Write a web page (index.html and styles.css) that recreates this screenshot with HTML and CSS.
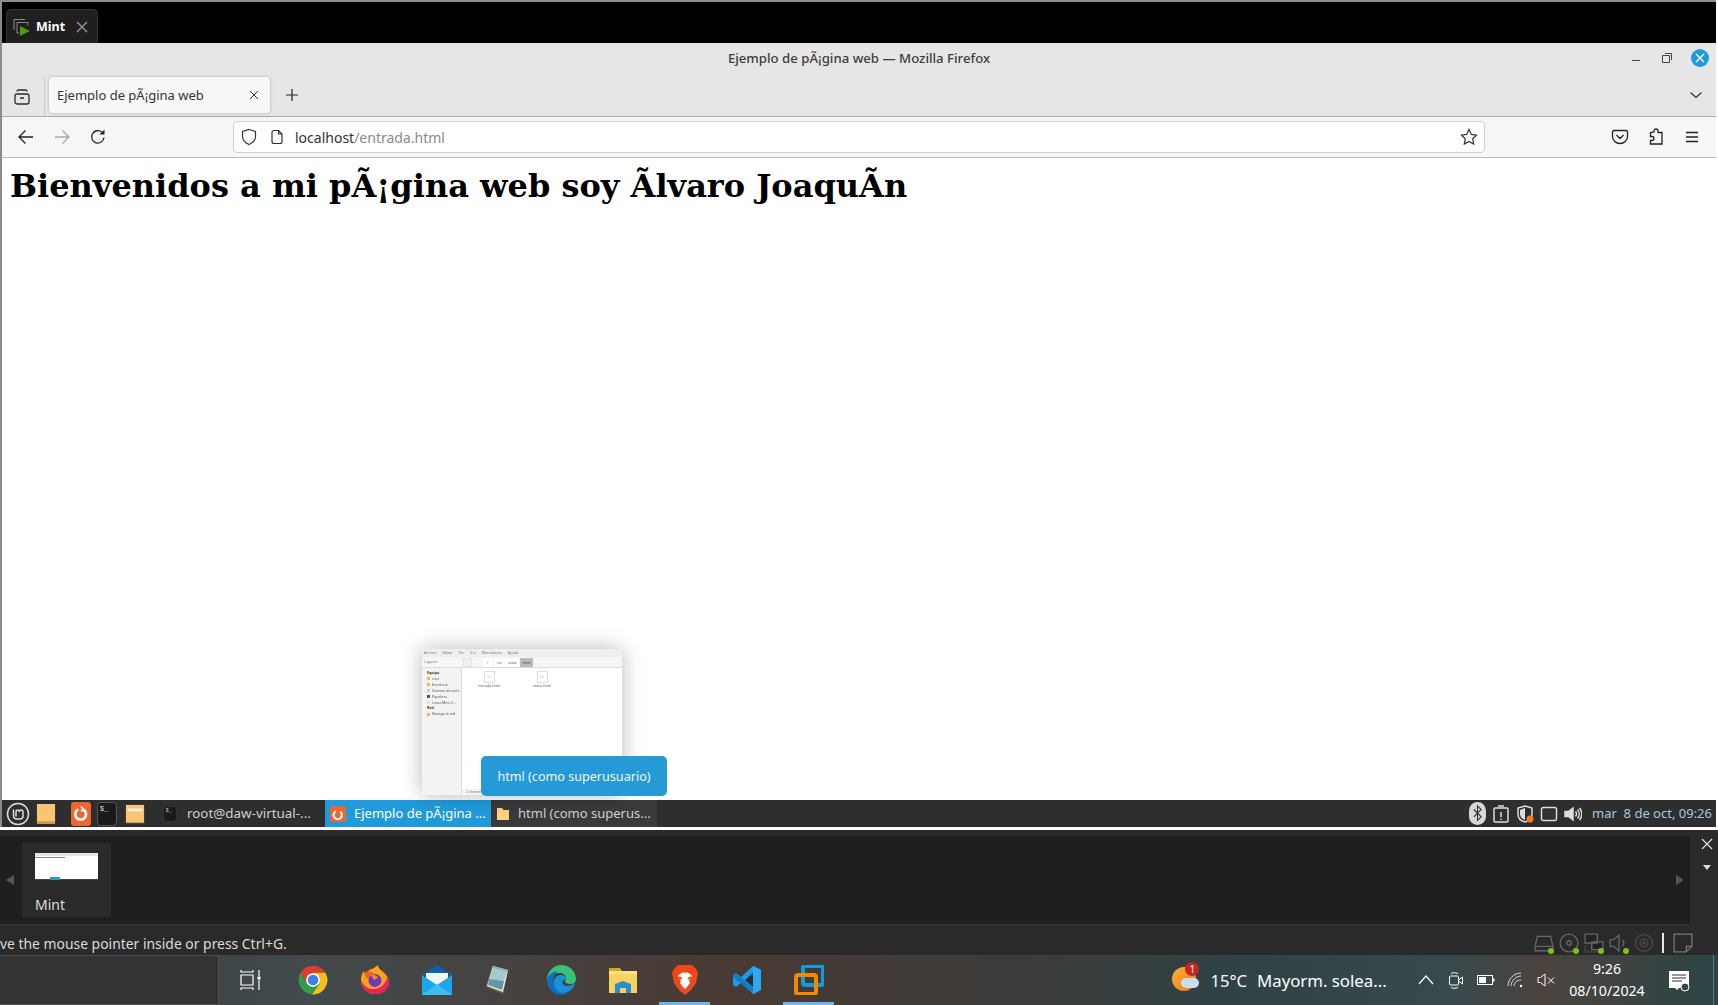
FILE: index.html
```html
<!DOCTYPE html>
<html lang="es">
<head>
<meta charset="utf-8">
<title>Ejemplo de pÃ¡gina web</title>
<link rel="stylesheet" href="styles.css">
</head>
<body>
<header class="vm-tabs">
  <div class="vm-tab">
    <svg class="i18" viewBox="0 0 18 18" fill="none" stroke="#8a8a8a" stroke-width="1"><path d="M1 12V1.5h11M4 15V4.5h11v3M4 15h2"/><path d="M7 8l10 5-10 5z" fill="#4f9a0c" stroke="none"/></svg>
    <span class="vm-tab-name">Mint</span>
    <svg class="i14" viewBox="0 0 14 14" stroke="#8c8c8c" stroke-width="1.6"><path d="M2 2l10 10M12 2L2 12"/></svg>
  </div>
</header>

<section class="guest">
  <div class="titlebar">
    <div></div>
    <div class="win-title">Ejemplo de pÃ¡gina web — Mozilla Firefox</div>
    <div class="win-ctrl">
      <svg class="i14" viewBox="0 0 14 14" stroke="#444"><path d="M3 9.500h8"/></svg>
      <svg class="i14" viewBox="0 0 14 14" fill="none" stroke="#444"><path d="M2.500 4.500h7v7h-7zM5 2.500h6.500V9" /></svg>
      <span class="win-close"><svg class="i12" viewBox="0 0 12 12" stroke="#fff" stroke-width="1.400"><path d="M2 2l8 8M10 2l-8 8"/></svg></span>
    </div>
  </div>
  <div class="tabrow">
    <div class="tabview"><svg class="i18" viewBox="0 0 18 18" fill="none" stroke="#2b2b2b" stroke-width="1.300"><rect x="2" y="6" width="14" height="10" rx="2"/><path d="M4 3.500c0-1 .5-1.500 1.500-1.500h7c1 0 1.500.5 1.500 1.500M7 10h4"/></svg></div>
    <div class="tab">
      <span class="tab-label">Ejemplo de pÃ¡gina web</span>
      <svg class="i12" viewBox="0 0 12 12" stroke="#333"><path d="M2 2l8 8M10 2l-8 8"/></svg>
    </div>
    <svg class="newtab i14" viewBox="0 0 14 14" stroke="#222" stroke-width="1.200"><path d="M7 1v12M1 7h12"/></svg>
    <svg class="tablist i14" viewBox="0 0 14 14" fill="none" stroke="#333" stroke-width="1.200"><path d="M1.500 4.500L7 9.500l5.500-5"/></svg>
  </div>
  <nav class="navbar">
    <span class="navcell"><svg class="i18" viewBox="0 0 18 18" fill="none" stroke="#222" stroke-width="1.300"><path d="M16 9H2M8.500 2.500L2 9l6.500 6.500"/></svg></span>
    <span class="navcell"><svg class="i18" viewBox="0 0 18 18" fill="none" stroke="#aaa" stroke-width="1.300"><path d="M2 9h14M9.500 2.500L16 9l-6.500 6.500"/></svg></span>
    <span class="navcell"><svg class="i18" viewBox="0 0 18 18" fill="none" stroke="#222" stroke-width="1.300"><path d="M15 9.500A6.200 6.200 0 1 1 13 4.300"/><path d="M15.500 1.500v5h-5" fill="#222" stroke="none"/></svg></span>
    <div class="urlbar">
      <svg class="i18" viewBox="0 0 18 18" fill="none" stroke="#333" stroke-width="1.200"><path d="M9 1.500l6.500 2v5c0 4-3 6.500-6.500 8-3.500-1.500-6.500-4-6.500-8v-5z"/></svg>
      <svg class="i16 url-page" viewBox="0 0 16 16" fill="none" stroke="#333" stroke-width="1.200"><path d="M3 3.500c0-1 .5-2 2-2h4.500L13 5v7.500c0 1-.5 2-2 2H5c-1.500 0-2-1-2-2zM9.500 1.500V5H13"/></svg>
      <span class="url-text"><span class="url-host">localhost</span>/entrada.html</span>
      <svg class="i18" viewBox="0 0 18 18" fill="none" stroke="#333" stroke-width="1.200"><path d="M9 1.500l2.300 4.900 5.200.7-3.800 3.600 1 5.300L9 13.400 4.300 16l1-5.300L1.500 7.100l5.200-.7z"/></svg>
    </div>
    <div class="nav-right">
      <span class="navcell"><svg class="i18" viewBox="0 0 18 18" fill="none" stroke="#222" stroke-width="1.300"><path d="M3 2.500h12c1 0 1.500.5 1.500 1.500v4.500c0 4-3.500 7-7.500 7s-7.500-3-7.500-7V4c0-1 .5-1.500 1.500-1.500zM5.500 7L9 10.500 12.500 7"/></svg></span>
      <span class="navcell"><svg class="i18" viewBox="0 0 18 18" fill="none" stroke="#222" stroke-width="1.300"><path d="M7 4V3a2 2 0 0 1 4 0v1.500h4V16H3.500v-3.500H5a2 2 0 0 0 0-4H3.500V4.500z"/></svg></span>
      <span class="navcell"><svg class="i18" viewBox="0 0 18 18" stroke="#222" stroke-width="1.300"><path d="M3 4.500h12M3 9h12M3 13.500h12"/></svg></span>
    </div>
  </nav>

  <main class="content">
    <h1>Bienvenidos a mi pÃ¡gina web soy Ãlvaro JoaquÃ­n</h1>

    <div class="preview">
      <div class="pv-menu"><span>Archivo</span><span>Editar</span><span>Ver</span><span>Ir a</span><span>Marcadores</span><span>Ayuda</span></div>
      <div class="pv-tools"><span class="pv-places">Lugares</span><span class="pv-edit"></span><span class="pv-crumb pv-gap">/</span><span class="pv-crumb">var</span><span class="pv-crumb">www</span><span class="pv-crumb pv-on">html</span></div>
      <div class="pv-body">
        <div class="pv-side">
          <b>Equipo</b><span class="dot">root</span><span class="dot">Escritorio</span><span class="dot grey">Sistema de arch...</span><span class="dot dark">Papelera</span><span class="dot pale">Linux Mint 2...</span>
          <b>Red</b><span class="dot">Navega la red</span>
        </div>
        <div class="pv-main">
          <div class="pv-files">
            <div class="pv-file"><span class="pv-doc">&lt;/&gt;</span>entrada.html</div>
            <div class="pv-file"><span class="pv-doc">&lt;/&gt;</span>index.html</div>
          </div>
          <div class="pv-status">2 elementos</div>
        </div>
      </div>
    </div>
    <div class="tooltip">html (como superusuario)</div>
  </main>

  <footer class="mint-panel">
    <div class="launchers">
      <svg class="i24" viewBox="0 0 24 24" fill="none" stroke="#ddd"><circle cx="12" cy="12" r="10.500" stroke-width="1.500"/><path d="M7.500 7.500v6c0 2.500 1.500 3.500 3.500 3.500h3c2 0 3-1.500 3-3V10c0-1-1-2-2-2s-1.500 1-1.500 1.500-.5-1.500-1.500-1.500-2 1-2 2v4.500" stroke-width="1.500"/></svg>
      <svg class="i22" viewBox="0 0 22 22"><path d="M1 0h20v20H1z" fill="#f8c672"/><path d="M1 19h20v3H1z" fill="#c99a4e"/></svg>
      <span class="fx-square lg"><svg viewBox="0 0 20 20" fill="none" stroke="#fff" stroke-width="3"><path d="M7 6a6 6 0 1 0 6 .5"/><path d="M10 3l3 3-3 2" stroke-width="2"/></svg></span>
      <span class="term-ico"><svg viewBox="0 0 20 20"><text x="2" y="9" class="term-txt">$_</text></svg></span>
      <svg class="i22 files-ico" viewBox="0 0 22 22"><path d="M1 1h20v20H1z" fill="#f8c672"/><path d="M3 5h16v3H3z" fill="#f4efe3"/><path d="M1 20h20v1H1z" fill="#c99a4e"/></svg>
    </div>
    <div class="wlist">
      <div class="wbtn"><span class="term-ico sm"><svg viewBox="0 0 20 20"><text x="3" y="9" class="term-txt">$_</text></svg></span><span class="wname">root@daw-virtual-...</span></div>
      <div class="wbtn on"><span class="fx-square"><svg viewBox="0 0 20 20" fill="none" stroke="#fff" stroke-width="3"><path d="M7 6a6 6 0 1 0 6 .5"/></svg></span><span class="wname">Ejemplo de pÃ¡gina ...</span></div>
      <div class="wbtn sel"><svg class="i14" viewBox="0 0 14 14"><path d="M1 1h5l1.500 2H13v10H1z" fill="#fbd37d"/></svg><span class="wname">html (como superus...</span></div>
    </div>
    <div class="tray">
      <span class="bt-pill"><svg viewBox="0 0 12 20" fill="none" stroke="#333" stroke-width="1.200"><path d="M2 6l8 8-4 4V2l4 4-8 8"/></svg></span>
      <svg class="i18" viewBox="0 0 18 18" fill="none" stroke="#ddd" stroke-width="1.500"><rect x="2" y="3" width="14" height="14" rx="1"/><path d="M6 1h6M9 7v5M9 13.500v1.500"/></svg>
      <svg class="i18" viewBox="0 0 18 18"><path d="M9 1l7 2v6c0 4-3 7-7 8-4-1-7-4-7-8V3z" fill="none" stroke="#ddd" stroke-width="1.500"/><path d="M9 3v12c-3-1-5-3-5-6V5z" fill="#ddd"/><circle cx="14" cy="14" r="3.500" fill="#f47c20"/></svg>
      <svg class="i18" viewBox="0 0 18 18" fill="none" stroke="#ddd" stroke-width="1.500"><rect x="1.500" y="2.500" width="15" height="13" rx="2"/><path d="M4 7V5h10v8H4z" fill="#333" stroke="none"/></svg>
      <svg class="i18" viewBox="0 0 18 18" fill="none" stroke="#ddd" stroke-width="1.500"><path d="M1 6.500h3.500L9 3v12l-4.500-3.500H1z" fill="#ddd"/><path d="M11.500 6.500a4 4 0 0 1 0 5M13.500 4.500a7 7 0 0 1 0 9M15.500 3a9 9 0 0 1 0 12"/></svg>
      <span class="clock">mar&nbsp; 8 de oct, 09:26</span>
    </div>
  </footer>
</section>

<section class="viewer">
  <div class="viewer-main">
    <div class="strip">
      <span class="arrow left"></span>
      <div class="snap">
        <div class="snap-shot"><span class="snap-top"></span><span class="snap-bar"></span><span class="snap-foot"></span><span class="snap-tip"></span></div>
        <span class="snap-name">Mint</span>
      </div>
      <span class="arrow right"></span>
    </div>
    <div class="viewer-side">
      <svg class="i14" viewBox="0 0 14 14" stroke="#ddd" stroke-width="1.200"><path d="M2 2l10 10M12 2L2 12"/></svg>
      <span class="tri-down"></span>
    </div>
  </div>
  <div class="status">
    <span class="status-text">ve the mouse pointer inside or press Ctrl+G.</span>
    <div class="status-icons">
      <span class="vb"><svg class="i20" viewBox="0 0 18 18" fill="none" stroke="#666" stroke-width="1.200"><path d="M3 3h12l2 9v4H1v-4zM1 12h16"/></svg><i class="led"></i></span>
      <span class="vb"><svg class="i20" viewBox="0 0 18 18" fill="none" stroke="#666" stroke-width="1.200"><circle cx="9" cy="9" r="8"/><circle cx="9" cy="9" r="2"/></svg><i class="led"></i></span>
      <span class="vb"><svg class="i20" viewBox="0 0 18 18" fill="none" stroke="#666" stroke-width="1.200"><path d="M1 1h11v8H1zM7 8h10v7H7z" fill="#222"/><path d="M1 12v5h14" stroke-dasharray="1 1.500"/></svg><i class="led"></i></span>
      <span class="vb"><svg class="i20" viewBox="0 0 18 18" fill="none" stroke="#666" stroke-width="1.200"><path d="M1 6h3l5-4v14l-5-4H1zM12 6a4 4 0 0 1 0 6"/></svg><i class="led"></i></span>
      <span class="vb"><svg class="i20" viewBox="0 0 18 18" fill="none" stroke="#4c4c4c" stroke-width="1.200"><circle cx="9" cy="9" r="7.500"/><circle cx="9" cy="9" r="3.500"/><circle cx="9" cy="9" r="1"/></svg></span>
      <span class="status-sep"></span>
      <svg class="i20 note" viewBox="0 0 18 18" fill="none" stroke="#777" stroke-width="1.200"><path d="M1 1h16v11l-5 5H1zM17 12h-5v5"/></svg>
    </div>
  </div>
</section>

<footer class="taskbar">
  <div class="search"></div>
  <div class="apps">
    <span class="app"><svg class="i24" viewBox="0 0 24 24" fill="none" stroke="#fff" stroke-width="1.200"><path d="M2 2v2h12V2M2 7h12v10H2zM2 22v-2h12v2M20 2v6M20 12v10"/><path d="M18.500 8.500h3v3h-3z" fill="#fff" stroke="none"/></svg></span>
    <span class="app"><svg class="i30" viewBox="0 0 48 48"><path d="M4.100 12.500A23 23 0 0 1 43.900 12.500H24L14 30z" fill="#d9402f"/><path d="M43.900 12.500A23 23 0 0 1 22 47L34 30 24 12.500z" fill="#f5bd19"/><path d="M22 47A23 23 0 0 1 4.100 12.500L14 30H34z" fill="#2e9e48"/><circle cx="24" cy="24" r="11" fill="#fff"/><circle cx="24" cy="24" r="8.500" fill="#3f7fe8"/></svg></span>
    <span class="app"><svg class="i30" viewBox="0 0 30 30"><path d="M15 29C7 29 1 23 1 15c0-4 1-7 3-9 0 2 1 3 2 3 1-3 4-5 6-5 3-1 4-3 6-4 0 3 2 4 4 6 4 3 7 7 7 11 0 7-6 12-14 12z" fill="#f8a318"/><path d="M15 29C7 29 1 23 1 15c2 6 8 10 14 9 6-1 11-5 12-12 1 1 2 3 2 5 0 7-6 12-14 12z" fill="#e8215f"/><path d="M4 8c3-2 8-2 10 1-3 1-4 4-2 6-4 0-7-3-8-7z" fill="#f4602a"/><circle cx="15" cy="15.500" r="6.500" fill="#6d38c2"/><path d="M11 10c3-1 6 0 7 3l-4 2z" fill="#f28a1e"/></svg></span>
    <span class="app"><svg class="i30" viewBox="0 0 30 30"><path d="M15 0L0 10h30z" fill="#0a62b5"/><path d="M4 8h22v7l-11 7L4 15z" fill="#f2f5f8"/><path d="M0 10l15 10 15-10v20H0z" fill="#1da7ea"/><path d="M0 30l15-11 15 11z" fill="#3fbcf4"/></svg></span>
    <span class="app"><svg class="i30" viewBox="0 0 30 30"><path d="M8 1l16 5-5 23L2 22z" fill="#7a6a3a"/><path d="M9 1l15 4-5 22L3 21z" fill="#e4eef0"/><path d="M9 3l14 4-3 9L5 14z" fill="#a4c9d0"/><path d="M5 14l15 2-2 9-14-5z" fill="#5f97a4"/><path d="M9 1l15 4-.5 2L8.500 3z" fill="#9aa"/></svg></span>
    <span class="app"><svg class="i30" viewBox="0 0 30 30"><path d="M15 0c8 0 15 6 15 14 0 3-2 5-6 5-3 0-5-1-5-3 0-1 1-1 1-3 0-3-3-5-7-5C7 8 3 11 1 15 1 7 7 0 15 0z" fill="#37c27b"/><path d="M1 15C2 10 7 6 12 6c-3 2-5 6-4 11 1 6 7 11 14 11-2 1-5 2-7 2C7 30 1 23 1 15z" fill="#0f6ec0"/><path d="M8 17c0-4 3-7 7-7 3 0 5 1 5 3 0 1-2 1-3 3s0 5 4 5c3 0 6-1 8-3-1 5-6 10-12 10-5 0-9-4-9-11z" fill="#1592d8"/></svg></span>
    <span class="app"><svg class="i30" viewBox="0 0 30 30"><path d="M1 3h11l2 3H1z" fill="#d9a21a"/><path d="M1 6h28v22H1z" fill="#f9d35f"/><path d="M1 6h28v3H1z" fill="#fbe08a"/><path d="M7 28V19l8-3 8 3v9h-5v-5h-6v5z" fill="#2b8ed0"/></svg></span>
    <span class="app on"><svg class="i30" viewBox="0 0 30 30"><path d="M8 0h14l4 4 2 4-2 10-5 7-6 5-6-5-5-7L2 8l2-4z" fill="#f1481a"/><path d="M10 9c2-1 3-2 5-1 2-1 3 0 5 1l2 2-3 5 1 2-3 4-2 2-2-2-3-4 1-2-3-5z" fill="#fff"/><path d="M9 12l3 2M21 12l-3 2" stroke="#f1481a" stroke-width="2"/></svg></span>
    <span class="app"><svg class="i30" viewBox="0 0 30 30"><path d="M21 1l8 4v20l-8 4-12-11-5 4-3-2v-10l3-2 5 4z" fill="#1b9ce8"/><path d="M21 8v14l-8-7z" fill="#2b2e32"/><path d="M21 1v28l8-4V5z" fill="#2ba9f2"/><path d="M1 10l3-2 17 15v6L1 12z" fill="#0e6fb4" opacity=".7"/></svg></span>
    <span class="app on"><svg class="i30" viewBox="0 0 30 30" fill="none"><rect x="9" y="1" width="20" height="19" rx="2" stroke="#109ce0" stroke-width="4"/><rect x="2" y="10" width="20" height="19" rx="2" stroke="#f08a00" stroke-width="4"/></svg></span>
  </div>
  <div class="systray">
    <div class="weather">
      <span class="wx-icon"><span class="sun"></span><span class="cloud"></span><span class="badge">1</span></span>
      <span class="temp">15°C</span><span class="wx-text">Mayorm. solea...</span>
    </div>
    <div class="sys-icons">
      <svg class="i18" viewBox="0 0 18 18" fill="none" stroke="#fff" stroke-width="1.200"><path d="M2 13l7-8 7 8"/></svg>
      <svg class="i18" viewBox="0 0 18 18" fill="none" stroke="#fff" stroke-width="1"><rect x="2.500" y="5" width="9" height="9" rx="1"/><path d="M11.500 9l4-3v7l-4-3M4 2.500c2-1 5-1 7 0M4 16.500c2 1 5 1 7 0"/></svg>
      <svg class="i18" viewBox="0 0 18 18"><rect x=".5" y="4.500" width="15" height="9" fill="none" stroke="#fff"/><rect x="2" y="6" width="7" height="6" fill="#fff"/><rect x="16" y="7.500" width="1.500" height="3" fill="#fff"/></svg>
      <svg class="i18" viewBox="0 0 18 18" fill="none" stroke="#ddd" stroke-width="1"><path d="M1 15c0-7 6-13 13-13M4 15c0-5 5-10 10-10M7 15c0-3 3-6 7-6"/><circle cx="14" cy="15" r="1.200" fill="#fff" stroke="none"/></svg>
      <svg class="i18" viewBox="0 0 18 18" fill="none" stroke="#fff" stroke-width="1"><path d="M1 6.500h2.500L8 3v12l-4.500-3.500H1zM11 6.500l6 6M17 6.500l-6 6"/></svg>
    </div>
    <div class="datetime"><span>9:26</span><span>08/10/2024</span></div>
    <svg class="i24 notif" viewBox="0 0 24 24"><path d="M2 3h20v17H12l-2 2-2-2H2z" fill="#fff"/><path d="M5 7h14M5 10h14M5 13h10" stroke="#333"/><circle cx="18" cy="19" r="4" fill="#3a4545" stroke="#fff"/></svg>
  </div>
</footer>
</body>
</html>
```
FILE: styles.css
```css
:root { --ui: "Noto Sans", "Liberation Sans", sans-serif; }
* { box-sizing: border-box; }
html, body { margin: 0; padding: 0; }
body { width: 1718px; height: 1005px; overflow: hidden; display: flex; flex-direction: column; background: #fff; font-family: var(--ui); }
svg { display: block; flex: none; }
.i12 { width: 12px; height: 12px; }
.i14 { width: 14px; height: 14px; }
.i16 { width: 16px; height: 16px; }
.i18 { width: 18px; height: 18px; }
.i20 { width: 20px; height: 20px; }
.i22 { width: 22px; height: 22px; }
.i24 { width: 24px; height: 24px; }
.i30 { width: 30px; height: 30px; }

/* VM tab strip */
.vm-tabs { height: 43px; width: 1716px; background: #000; border-top: 2px solid #8c8c8c; border-left: 2px solid #8c8c8c; padding: 7px 0 0 4px; flex: none; }
.vm-tab { width: 92px; height: 34px; background: #1f1f1f; border: 1px solid #333; border-bottom: 0; border-radius: 5px 5px 0 0; display: flex; align-items: center; padding: 0 0 0 6px; gap: 5px; color: #fff; }
.vm-tab-name { font-size: 12.5px; font-weight: 700; width: 34px; }

/* Guest */
.guest { flex: none; height: 784px; width: 1716px; border-left: 2px solid #8c8c8c; display: flex; flex-direction: column; }
.titlebar { height: 30px; background: #e6e6e6; display: grid; grid-template-columns: 1fr auto 1fr; align-items: center; flex: none; }
.win-title { font-size: 13.2px; font-weight: 500; color: #3d3d3d; }
.win-ctrl { display: flex; align-items: center; justify-content: flex-end; gap: 17px; padding-right: 7px; }
.win-close { width: 18px; height: 18px; border-radius: 50%; background: #1f9bdc; display: flex; align-items: center; justify-content: center; }
.tabrow { height: 44px; background: #e6e6e6; border-bottom: 1px solid #ababab; display: flex; align-items: flex-start; padding-top: 4px; flex: none; }
.tabview { width: 43px; height: 39px; border-right: 1px solid #c8c8c8; display: flex; align-items: center; justify-content: center; padding-right: 2px; }
.tab { margin-left: 4px; width: 221px; height: 36px; background: #f7f7f7; border-radius: 4px; box-shadow: 0 0 3px rgba(0,0,0,.25); display: flex; align-items: center; justify-content: space-between; padding: 0 10px 0 8px; }
.tab-label { font-size: 13px; color: #333; }
.newtab { margin: 11px 0 0 15px; }
.tablist { margin: 11px 13px 0 auto; }
.navbar { height: 41px; background: #f6f6f6; border-bottom: 1px solid #bdbdbd; display: flex; align-items: center; padding: 0 6px; flex: none; }
.navcell { width: 36px; display: flex; justify-content: center; flex: none; }
.urlbar { margin-left: 117px; width: 1252px; height: 32px; background: #fff; border: 1px solid #cfcfcf; border-radius: 4px; display: flex; align-items: center; padding: 0 6px 0 6px; }
.url-page { margin-left: 11px; }
.url-text { margin-left: 10px; font-size: 14px; color: #8a8a8a; flex: 1; }
.url-host { color: #333; }
.nav-right { margin-left: auto; display: flex; }

.content { flex: 1; background: #fff; padding: 9px 8px 8px; position: relative; min-height: 0; }
h1 { margin: 0; font-family: "DejaVu Serif", serif; font-size: 32px; font-weight: 700; color: #000; }

/* thumbnail preview */
.preview { position: absolute; left: 420px; top: 491px; width: 200px; height: 146px; background: #fff; box-shadow: 0 0 20px rgba(0,0,0,.28); font-size: 3.6px; line-height: 5.9px; color: #777; display: flex; flex-direction: column; overflow: hidden; filter: blur(.45px); }
.pv-menu { height: 8px; background: #efefef; display: flex; gap: 6px; padding: 0 2px; align-items: center; flex: none; }
.pv-tools { height: 11px; background: #f6f6f6; border-bottom: 1px solid #ddd; display: flex; align-items: center; gap: 1px; padding: 0 2px; flex: none; }
.pv-places { width: 38px; }
.pv-edit { width: 9px; height: 9px; background: #f8efe4; border: 1px solid #e4e4e4; margin-right: 10px; }
.pv-crumb { padding: 0 2.500px; background: #fff; line-height: 9px; }
.pv-gap { margin-right: 1px; padding: 0 4px; }
.pv-on { background: #bbb; color: #444; }
.pv-body { flex: 1; display: flex; min-height: 0; }
.pv-side { width: 40px; background: #f3f3f3; border-right: 1px solid #ddd; display: flex; flex-direction: column; padding: 2px 0 0 5px; overflow: hidden; }
.pv-side span { padding-left: 5px; white-space: nowrap; color: #555; position: relative; }
.pv-side b { color: #333; }
.dot::before { content: ""; position: absolute; left: 0; top: 1.500px; width: 3px; height: 3px; background: #f4b64f; }
.dot.grey::before { background: #ccc; }
.dot.dark::before { background: #555; }
.dot.pale::before { background: #e4e4e4; }
.pv-main { flex: 1; display: flex; flex-direction: column; min-width: 0; }
.pv-files { flex: 1; display: flex; gap: 27px; padding: 3px 0 0 14px; }
.pv-file { width: 26px; text-align: center; display: flex; flex-direction: column; align-items: center; white-space: nowrap; color: #666; }
.pv-doc { width: 11px; height: 12px; border: 1px solid #ddd; color: #e8875c; display: flex; align-items: center; justify-content: center; }
.pv-status { height: 6px; background: #f3f3f3; padding-left: 4px; line-height: 6px; flex: none; }
.tooltip { position: absolute; left: 479px; top: 598px; width: 186px; height: 40px; background: #269ad7; border-radius: 5px; color: #eef6fb; font-size: 12.6px; display: flex; align-items: center; justify-content: center; }

/* Mint panel */
.mint-panel { height: 27px; background: #2e2e2e; display: flex; align-items: center; flex: none; color: #d0d0d0; font-size: 13px; }
.launchers { display: flex; align-items: center; gap: 6px; padding-left: 4px; width: 155px; }
.launchers .i22 { width: 20px; height: 22px; }
.launchers .fx-square { margin-left: 9px; }
.files-ico { margin-left: 2px; }
.fx-square { width: 16px; height: 16px; background: #f0642d; border-radius: 3px; padding: 1px; display: block; flex: none; }
.fx-square.lg { width: 20px; height: 24px; padding: 2px 1px; }
.term-ico { width: 20px; height: 24px; background: #1a1a1a; border: 1px solid #555; border-radius: 4px; display: block; flex: none; }
.term-ico.sm { width: 14px; height: 16px; border-color: #333; }
.term-txt { font-family: "Liberation Mono", monospace; font-size: 8px; fill: #ddd; }
.wlist { display: flex; height: 27px; }
.wbtn { width: 166px; display: flex; align-items: center; gap: 8px; padding: 0 0 0 5px; }
.wbtn:first-child { width: 168px; padding-left: 6px; gap: 10px; font-size: 13.4px; }
.wbtn.on { background: #1f9bdc; color: #fff; }
.wbtn.sel { background: #3a3a3a; }
.wname { white-space: nowrap; padding-bottom: 2px; }
.tray { margin-left: auto; display: flex; align-items: center; gap: 6px; padding-right: 4px; }
.bt-pill { width: 17px; height: 23px; background: #d8d8d8; border-radius: 9px; padding: 2px 3px; display: block; }
.clock { margin-left: 4.500px; padding-bottom: 2px; color: #a8c8de; font-size: 13px; white-space: nowrap; }

/* VirtualBox viewer */
.viewer { flex: none; height: 128px; border-top: 3px solid #fff; background: #2a2a2a; display: flex; flex-direction: column; }
.viewer-main { flex: none; height: 95px; padding-top: 5px; display: flex; }
.strip { width: 1690px; height: 90px; background: #1f1f1f; border-top: 1px solid #2c2c2c; border-bottom: 1px solid #333; display: flex; align-items: center; padding: 0 6px; }
.snap { margin-left: 8px; width: 89px; height: 74px; background: #2a2a2a; padding: 10px 13px; display: flex; flex-direction: column; gap: 15px; }
.snap-shot { width: 63px; height: 27px; background: #fff; position: relative; flex: none; }
.snap-top { position: absolute; left: 0; top: 0; width: 100%; height: 3px; background: #e6e6e6; }
.snap-bar { position: absolute; left: 0; top: 4px; width: 30px; height: 1px; background: #888; }
.snap-foot { position: absolute; left: 0; bottom: 0; width: 100%; height: 1px; background: #444; }
.snap-tip { position: absolute; left: 15px; top: 24px; width: 10px; height: 3px; background: #269ad7; }
.snap-name { color: #dedede; font-size: 14px; line-height: 20px; }
.arrow { width: 0; height: 0; border-top: 5px solid transparent; border-bottom: 5px solid transparent; }
.arrow.left { border-right: 8px solid #555; }
.arrow.right { margin-left: auto; border-left: 8px solid #555; }
.viewer-side { flex: 1; display: flex; flex-direction: column; align-items: center; padding: 2px 0 0 6px; gap: 14px; }
.tri-down { width: 0; height: 0; border-left: 4px solid transparent; border-right: 4px solid transparent; border-top: 5px solid #ddd; }
.status { flex: 1; display: flex; align-items: center; justify-content: space-between; background: #2a2a2a; padding-right: 25px; }
.status-text { color: #dcdcdc; font-size: 13.9px; white-space: nowrap; margin-top: 6px; }
.status-icons { display: flex; align-items: center; gap: 5px; margin-top: 6px; }
.vb { position: relative; display: block; width: 20px; height: 20px; }
.led { position: absolute; right: 0; bottom: -1px; width: 6px; height: 6px; border-radius: 50%; background: #7ec11a; }
.status-sep { width: 2px; height: 20px; background: #e8e8e8; margin-left: 3px; }
.note { margin-left: 4px; }

/* Windows taskbar */
.taskbar { flex: none; height: 50px; display: flex; align-items: center; background: linear-gradient(90deg, #3a3d3e 0%, #424a4b 18%, #493a34 42%, #3b3b3a 60%, #2f4245 72%, #364a4e 84%, #4c433e 90%, #2b4445 100%); }
.search { width: 219px; height: 50px; background: #333; border: 1px solid #4f4f4f; border-width: 1px 1px 1px 0; flex: none; }
.apps { display: flex; padding-left: 6px; }
.app { width: 51px; margin-right: 11px; height: 50px; display: flex; align-items: center; justify-content: center; position: relative; }
.app.on::after { content: ""; position: absolute; left: 0; right: 0; bottom: 0; height: 3px; background: #6cb4ec; }
.systray { margin-left: auto; margin-right: 4px; height: 50px; border-right: 1px solid #66757a; display: flex; align-items: center; color: #fff; padding-right: 22px; }
.weather { display: flex; align-items: center; }
.wx-icon { position: relative; width: 28px; height: 28px; display: block; }
.sun { position: absolute; left: 0; top: 1px; width: 24px; height: 24px; border-radius: 50%; background: linear-gradient(135deg, #f9b233, #ee7a1a); }
.cloud { position: absolute; left: 9px; top: 12px; width: 18px; height: 10px; border-radius: 6px; background: #c8dcf0; }
.badge { position: absolute; left: 13px; top: -4px; width: 14px; height: 14px; border-radius: 50%; background: #c8261f; color: #fff; font-size: 10px; display: flex; align-items: center; justify-content: center; }
.temp { margin-left: 10px; font-size: 16.6px; }
.wx-text { margin-left: 10px; font-size: 16.8px; white-space: nowrap; width: 160px; }
.sys-icons { display: flex; align-items: center; gap: 12px; }
.datetime { display: flex; flex-direction: column; align-items: center; margin-left: 4px; width: 96px; font-size: 14.2px; line-height: 22px; }
.notif { margin-left: 12px; }
```
